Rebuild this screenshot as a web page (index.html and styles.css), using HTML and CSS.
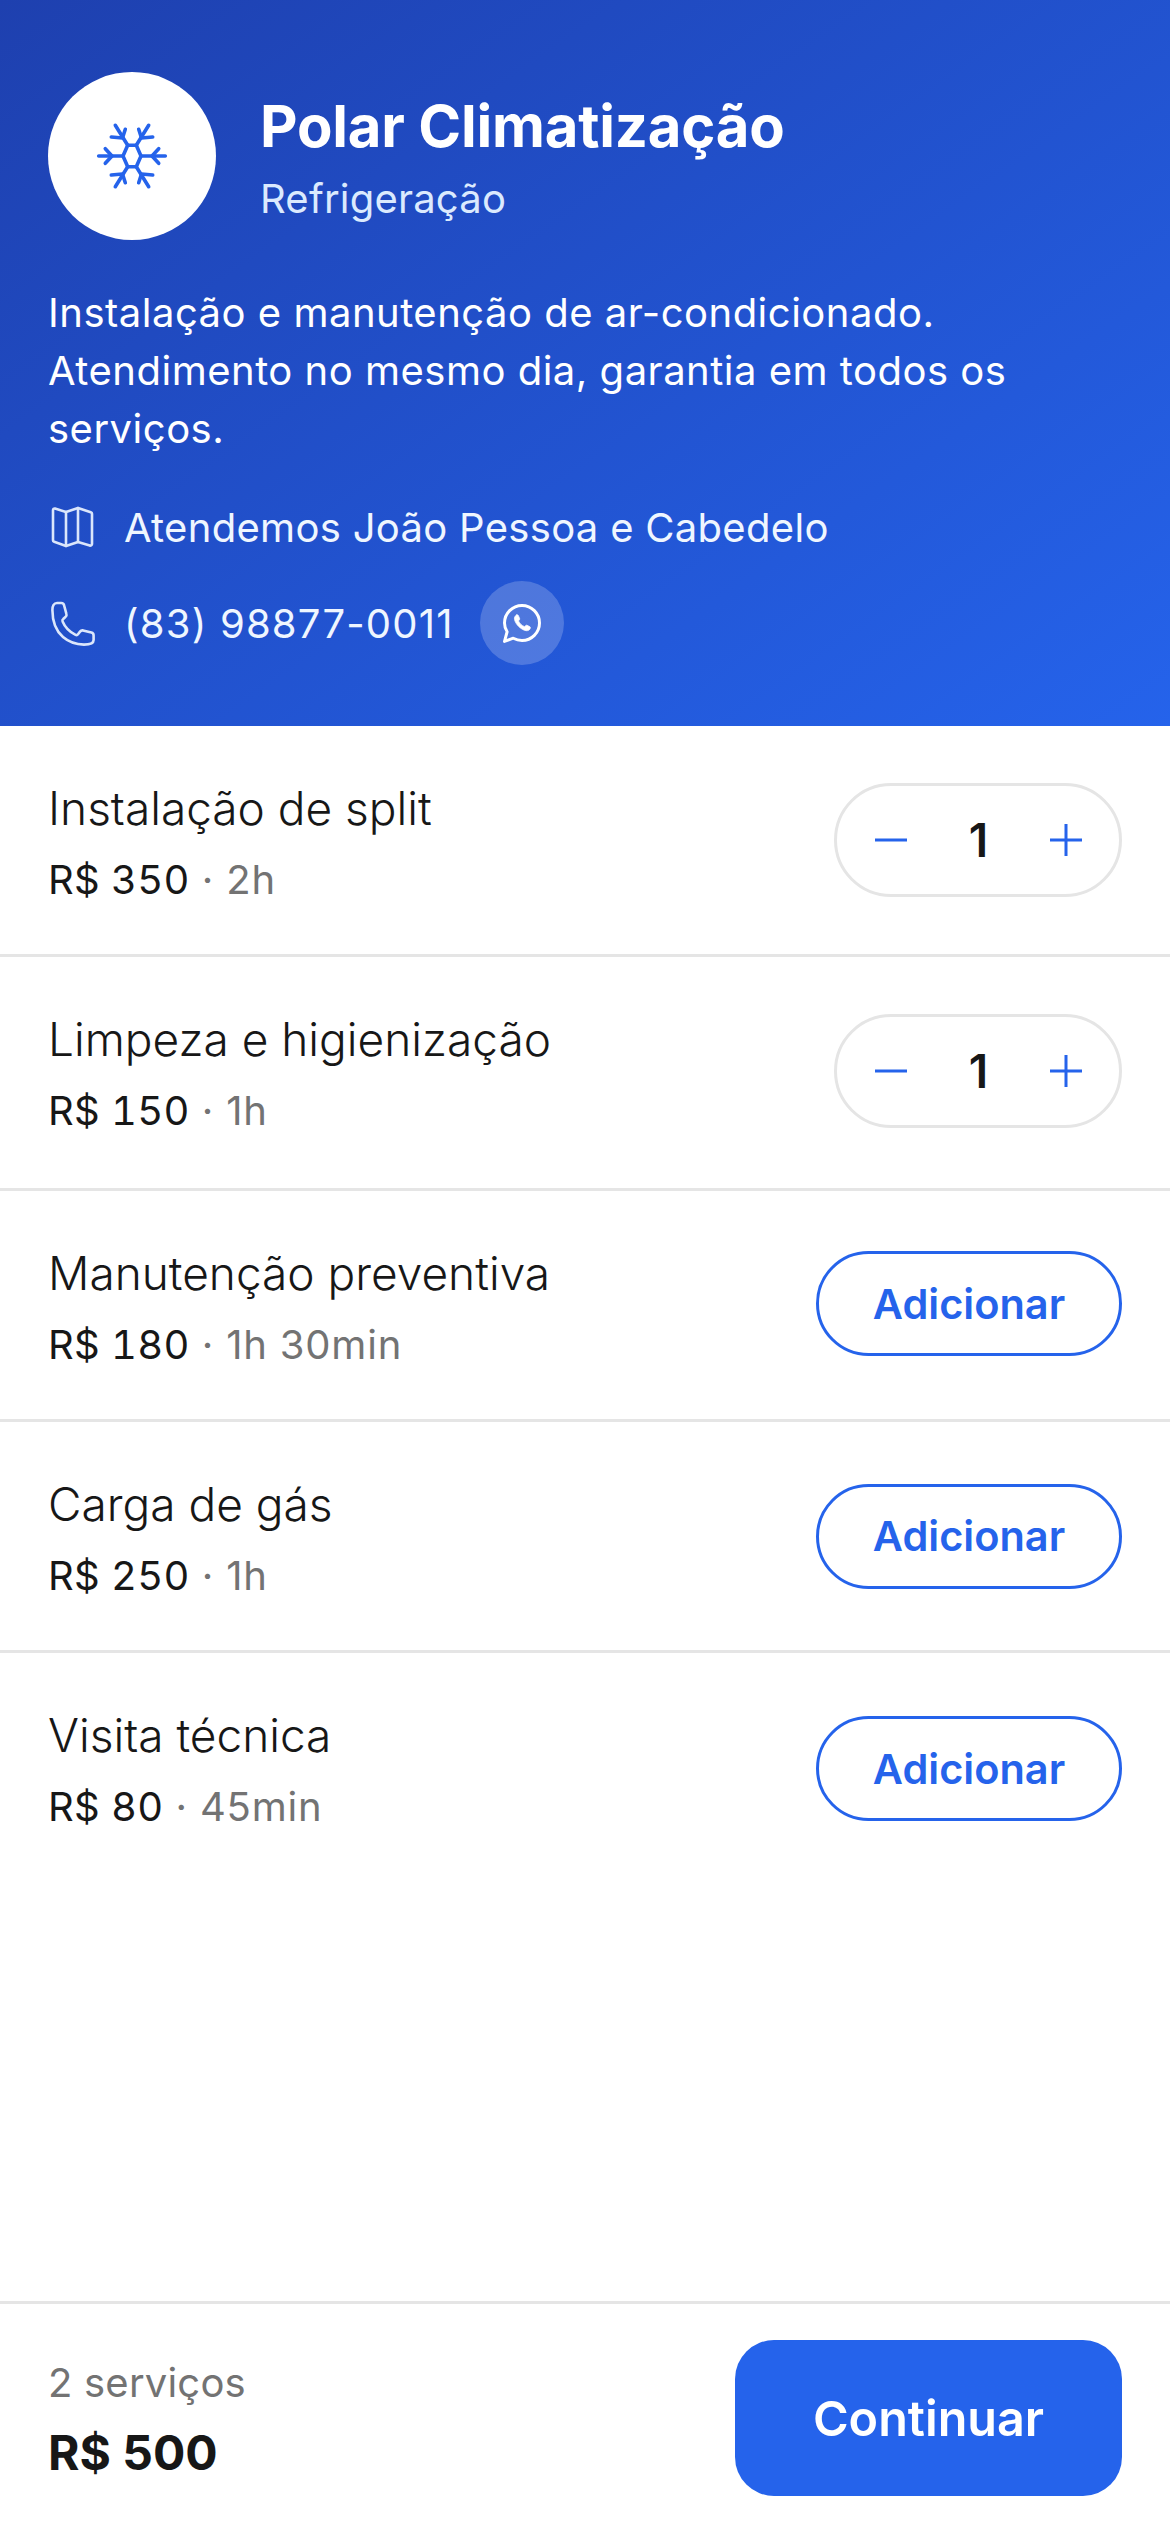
FILE: index.html
```html
<!DOCTYPE html>
<html lang="pt-BR">
<head>
<meta charset="utf-8">
<title>Polar Climatização</title>
<link rel="stylesheet" href="styles.css">
</head>
<body>
<div class="page">
  <header class="hero">
    <div class="brand">
      <div class="logo">
        <svg class="snow" viewBox="0 0 72 72" fill="none" stroke="#2563eb" stroke-width="3.600" stroke-linecap="round" stroke-linejoin="round">
          <path d="M27 36 31.700 25.300H40.300L45 36 40.300 46.700H31.700Z"/>
          <path d="M27 36H2.700M45 36H69.300"/>
          <path d="M9.300 28.700 16 36 9.300 43.300M62.700 28.700 56 36 62.700 43.300"/>
          <path d="M31.700 25.300 19.300 5.300M40.300 25.300 52.700 5.300M31.700 46.700 19.300 66.700M40.300 46.700 52.700 66.700"/>
          <path d="M15.300 17 26.500 18 29.300 9.300M56.700 17 45.500 18 42.700 9.300M15.300 55 26.500 54 29.300 62.700M56.700 55 45.500 54 42.700 62.700"/>
        </svg>
      </div>
      <div class="brand-text">
        <h1 class="name">Polar Climatização</h1>
        <p class="category">Refrigeração</p>
      </div>
    </div>
    <p class="desc">Instalação e manutenção de ar-condicionado. Atendimento no mesmo dia, garantia em todos os serviços.</p>
    <div class="info info-area">
      <svg class="info-icon" viewBox="0 0 24 24" fill="none" stroke="#dbe6fb" stroke-width="1.300" stroke-linecap="round" stroke-linejoin="round">
        <path d="M9 4.500 3.500 2.800C3 2.700 2.500 3 2.500 3.600V18.600C2.500 19 2.800 19.300 3.100 19.400L9 21.500L15 19.500L20.900 21.300C21.500 21.400 22 21 22 20.500V5.400C22 5 21.700 4.700 21.400 4.600L15 2.500Z"/>
        <path d="M9 4.500V21.500M15 2.500V19.500"/>
      </svg>
      <span>Atendemos João Pessoa e Cabedelo</span>
    </div>
    <div class="info info-phone">
      <svg class="info-icon" viewBox="0 0 24 24" fill="none" stroke="#dbe6fb" stroke-width="1.300" stroke-linecap="round" stroke-linejoin="round">
        <path d="M2.200 5.500C2.200 12 4 16 7.500 19C10.500 21.600 14 22.700 18 22.800C20 22.800 22.800 22.700 22.800 20.500V18.200C22.800 17.500 22.400 17 21.700 16.800L17.500 15.700C16.900 15.600 16.400 15.800 16 16.300L15 17.600C14.700 18 14.200 18.100 13.800 17.900C10.900 16.500 8.500 14.100 7.300 11.200C7.100 10.700 7.200 10.300 7.600 10L8.700 9C9.200 8.600 9.400 8 9.200 7.400L8 3C7.800 2.400 7.300 2 6.700 2H4.500C3 2 2.200 3.500 2.200 5.500Z"/>
      </svg>
      <span class="phone">(83) 98877-0011</span>
      <span class="wa">
        <svg class="wa-icon" viewBox="0 0 24 24" fill="none" stroke="#fff" stroke-width="1.700" stroke-linejoin="round" stroke-linecap="round">
          <path d="M2 22.500 3.500 17C2.500 15.500 2 13.800 2 12C2 6.500 6.500 2 12 2C17.500 2 22 6.500 22 12C22 17.500 17.500 22 12 22C10.200 22 8.500 21.500 7 20.700Z"/>
          <path d="M8.700 7.500C8 8 7.500 8.800 7.700 9.900C8.100 12.500 11.500 16.100 14.400 16.400C15.500 16.500 16.400 15.900 16.700 15.100C16.900 14.700 16.800 14.300 16.500 14.100L14.900 13.300C14.500 13.100 14.200 13.300 14 13.500L13.500 14.100C11.800 13.400 10.700 12.300 10 10.800L10.500 10.200C10.700 9.900 10.800 9.600 10.600 9.300L9.900 7.700C9.700 7.200 9.100 7.200 8.700 7.500Z" fill="#fff" stroke-width="0.400"/>
        </svg>
      </span>
    </div>
  </header>

  <main class="list">
    <section class="row">
      <div class="row-text">
        <h2 class="svc">Instalação de split</h2>
        <p class="meta"><span class="price">R$ 350</span> · 2h</p>
      </div>
      <div class="stepper">
        <span class="step-btn"><svg viewBox="0 0 32 32"><path d="M0 16H32"/></svg></span>
        <span class="qty">1</span>
        <span class="step-btn"><svg viewBox="0 0 32 32"><path d="M0 16H32M16 0V32"/></svg></span>
      </div>
    </section>
    <section class="row row-tall">
      <div class="row-text">
        <h2 class="svc">Limpeza e higienização</h2>
        <p class="meta"><span class="price">R$ 150</span> · 1h</p>
      </div>
      <div class="stepper">
        <span class="step-btn"><svg viewBox="0 0 32 32"><path d="M0 16H32"/></svg></span>
        <span class="qty">1</span>
        <span class="step-btn"><svg viewBox="0 0 32 32"><path d="M0 16H32M16 0V32"/></svg></span>
      </div>
    </section>
    <section class="row">
      <div class="row-text">
        <h2 class="svc">Manutenção preventiva</h2>
        <p class="meta"><span class="price">R$ 180</span> · 1h 30min</p>
      </div>
      <button class="add add-up">Adicionar</button>
    </section>
    <section class="row">
      <div class="row-text">
        <h2 class="svc">Carga de gás</h2>
        <p class="meta"><span class="price">R$ 250</span> · 1h</p>
      </div>
      <button class="add">Adicionar</button>
    </section>
    <section class="row row-last">
      <div class="row-text">
        <h2 class="svc">Visita técnica</h2>
        <p class="meta"><span class="price">R$ 80</span> · 45min</p>
      </div>
      <button class="add add-down">Adicionar</button>
    </section>
  </main>

  <footer class="bar">
    <div class="totals">
      <span class="count">2 serviços</span>
      <strong class="total">R$ 500</strong>
    </div>
    <button class="cta">Continuar</button>
  </footer>
</div>
</body>
</html>
```

FILE: styles.css
```css
* { box-sizing: border-box; margin: 0; padding: 0; }
html, body { height: 100%; }
body { background: #fff; font-family: Inter, "Noto Sans", sans-serif; color: #171717; }
.page { height: 2532px; display: flex; flex-direction: column; }
.hero {
  height: 726px;
  padding: 72px 48px 0;
  background: linear-gradient(145deg, #1e40af 0%, #2563eb 100%);
  color: #fff;
}
.brand { display: flex; align-items: center; gap: 44px; }
.logo { width: 168px; height: 168px; border-radius: 50%; background: #fff; display: flex; align-items: center; justify-content: center; flex: none; }
.snow { width: 72px; height: 72px; }
.brand-text { display: flex; flex-direction: column; gap: 18px; padding-top: 6px; }
.name { font-size: 58px; font-weight: 700; line-height: 62px; letter-spacing: -0.2px; }
.category { font-size: 40px; line-height: 48px; color: #dbeafe; font-weight: 400; letter-spacing: .2px; }
.desc { margin-top: 44px; font-size: 40px; line-height: 58px; letter-spacing: .5px; }
.info { display: flex; align-items: center; font-size: 40px; letter-spacing: .3px; color: #eff6ff; }
.info-area { margin-top: 39px; height: 60px; gap: 28px; }
.info-phone { margin-top: 24px; height: 84px; gap: 28px; }
.info-icon { width: 48px; height: 48px; flex: none; }
.phone { letter-spacing: 1.200px; }
.wa { width: 84px; height: 84px; margin-left: -2px; border-radius: 50%; background: rgba(255,255,255,.2); display: flex; align-items: center; justify-content: center; }
.wa-icon { width: 42px; height: 42px; }
.list { flex: 1; display: flex; flex-direction: column; }
.row { height: 231px; padding: 0 48px; display: flex; align-items: center; justify-content: space-between; border-bottom: 3px solid #e5e5e5; }
.row-tall { height: 234px; padding-bottom: 3px; }
.row-last { border-bottom: 0; padding-bottom: 3px; }
.row-text { display: flex; flex-direction: column; gap: 19px; padding-top: 5px; }
.svc { font-size: 46px; line-height: 56px; font-weight: 300; }
.meta { font-size: 40px; line-height: 50px; color: #737373; letter-spacing: .8px; }
.price { color: #171717; font-variant-numeric: tabular-nums; letter-spacing: .3px; }
.stepper { width: 288px; height: 114px; border: 3px solid #e5e5e5; border-radius: 57px; display: flex; align-items: center; justify-content: space-between; padding: 0 37px 0 38px; }
.step-btn { width: 32px; height: 32px; display: block; }
.step-btn svg { display: block; width: 32px; height: 32px; fill: none; stroke: #2563eb; stroke-width: 3; }
.qty { font-size: 46px; font-weight: 600; }
.add { width: 306px; height: 105px; border: 3px solid #2563eb; border-radius: 53px; background: #fff; color: #2563eb; font: 600 41.500px Inter, sans-serif; }
.add-up { margin-bottom: 3px; }
.add-down { margin-top: 3px; }
.bar { height: 231px; border-top: 3px solid #e5e5e5; padding: 36px 48px 36px; display: flex; align-items: center; justify-content: space-between; }
.totals { display: flex; flex-direction: column; gap: 18px; padding-top: 3px; }
.count { font-size: 40px; line-height: 48px; color: #737373; letter-spacing: .2px; }
.total { font-size: 48px; line-height: 56px; font-weight: 700; }
.cta { width: 387px; height: 156px; border: 0; border-radius: 39px; background: #2563eb; color: #fff; font: 600 48.500px Inter, sans-serif; }
```
